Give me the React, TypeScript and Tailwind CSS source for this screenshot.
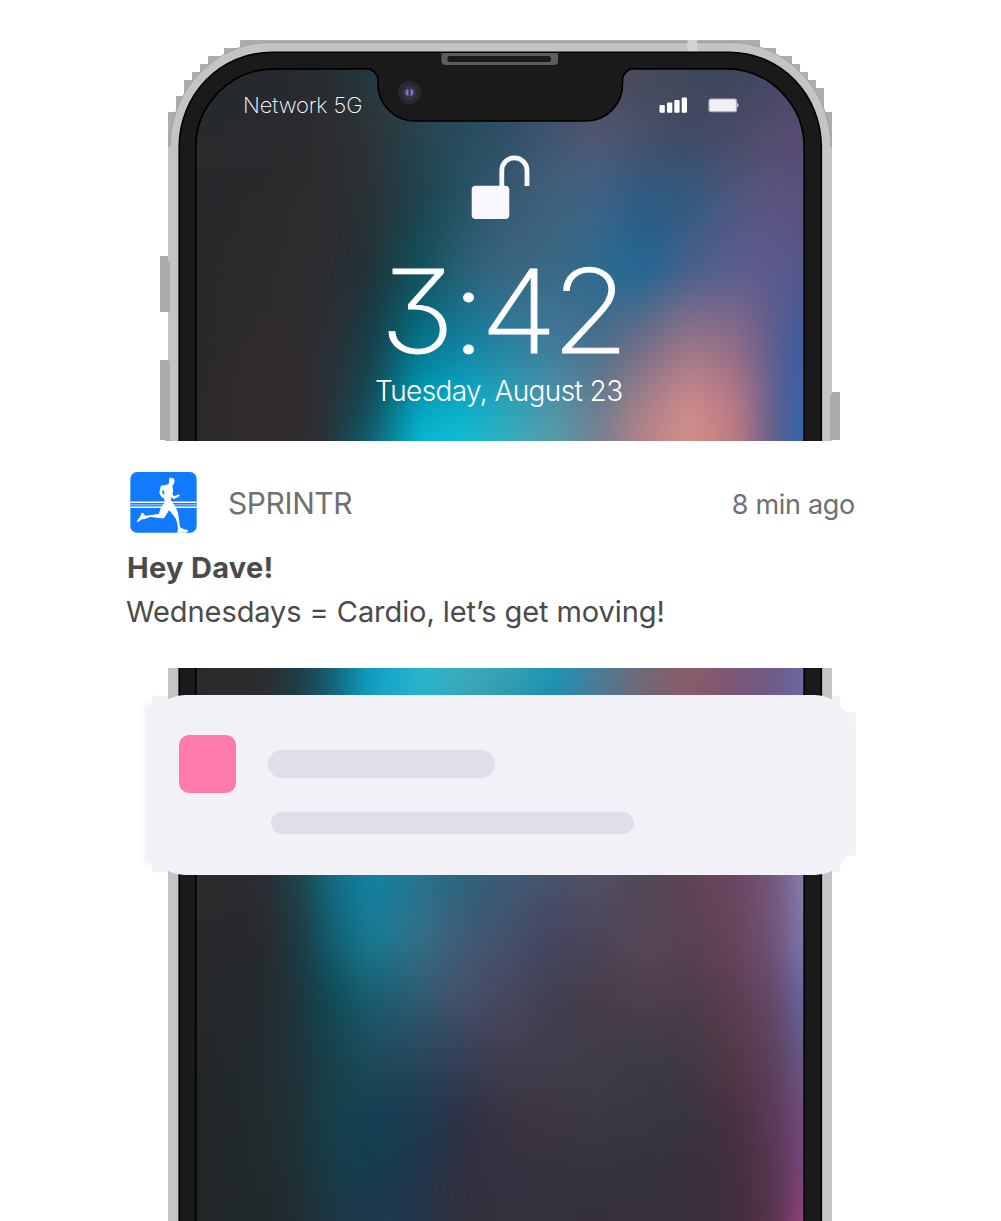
import React from "react";

const COLUMNS = [196, 260, 299, 330, 370, 420, 464, 509, 554, 598, 643, 689, 734, 777, 804];

// Each entry is a horizontal run of wallpaper colours at a given height.
const ROWS: [number, string][] = [
  [68, "262b2d 24282e 262b30 262c2f 213a40 2a434e 2c4a5a 334c60 404c60 4d4a5c 484a5a 40495a 3d4759 43456a 50486a"],
  [130, "282b2d 292b2e 2a2b2e 2d2e31 2e3338 27454f 2a4b5e 304f66 435470 525570 49506a 404963 484b66 534c6d 574a70"],
  [200, "28292c 2a292c 2c2b2e 2d2d30 2a3236 1e434d 265465 395a73 41627c 3e6487 2d5a82 335b80 50577f 5c5480 5a5080"],
  [270, "29282b 2c2a2d 2d2c2f 2c2e32 213238 0f525c 2c6076 3a6680 3a6986 2c6b91 206894 465f8c 5c5e90 5c5a8c 52588a"],
  [340, "2a282b 2f2b2e 302c30 2c3035 183d47 04748a 1080a0 2a809e 42789a 466e8c 6f6c88 997488 8e6c88 5b5c90 3c5ca0"],
  [400, "2b282b 322b2f 322c30 293237 134b57 00a0be 0caac6 2aa2b8 4c94a8 687c90 a47e88 cc8a8c ba7884 5c5e90 3462a8"],
  [440, "2b292b 332b2f 302c30 25343a 0f6070 08bad4 14bdd2 36aebe 5a9caa 78808e b88486 d4908a c07c82 5c5e8c 2c66b2"],
  [668, "2c292c 2b2c2d 1f3c46 146174 0fa0c4 29b4ce 3fabb8 38a4b2 1a96b8 487e9a 6e6876 8a5c68 7c5876 6e5c8c 6c6aa4"],
  [695, "2c292c 2b2c2d 1f3c46 146174 0fa0c4 29b4ce 38a6b8 2a9ab0 1e8db0 507a94 736676 8a5c68 7a5674 6e5c8c 6c6aa4"],
  [875, "2c2c2e 2d2b30 1e434d 146a80 1283a6 26738e 2d637b 3e5a74 48526c 544f64 504858 5e4454 6d4460 75597f 8a7eb2"],
  [940, "28292c 28292d 1e3942 115d6e 187b94 357088 3f5b76 454f6c 454560 4b4558 574758 584254 68425b 71557c 7c7aae"],
  [1000, "272a2c 24292c 1d363e 124953 175d70 305a70 46506a 48475e 404050 483c4a 4f3e4c 4d3c48 5a3e50 66496a 6268a4"],
  [1060, "24272a 232b2f 1e343b 18424a 1e4a5a 28465c 363f56 423d4e 403d4c 403c49 3c3a47 403944 543746 5e4260 695888"],
  [1120, "212628 232b2d 1e3238 17404a 123f52 1c3a50 2e3044 3a3442 3e3643 3c3844 383844 3a3442 48303f 5a3c58 744c7e"],
  [1170, "212628 222a2c 1f3036 183c48 133d50 21364c 31303f 363140 363240 363340 353240 38303e 432f3d 573752 7c447c"],
  [1221, "212628 20282a 1f2e33 1e3643 1e394b 24354a 332f3d 34303d 35303e 352f3c 38303d 39303d 422e3b 5a3450 94447e"],
];

function Wallpaper({ id }: { id: string }) {
  return (
    <g clipPath={`url(#${id}-screen)`}>
      <defs>
        <filter id={`${id}-soften`} filterUnits="userSpaceOnUse" x="100" y="0" width="800" height="1300" colorInterpolationFilters="sRGB">
          <feGaussianBlur stdDeviation="9 12" />
        </filter>
        {ROWS.map(([y, colours], i) => (
          <React.Fragment key={y}>
            <linearGradient id={`${id}-row${i}`} gradientUnits="userSpaceOnUse" x1="196" x2="804" y1="0" y2="0">
              {colours.split(" ").map((c, k) => (
                <stop key={k} offset={(COLUMNS[k] - 196) / 608} stopColor={`#${c}`} />
              ))}
            </linearGradient>
            {i > 0 && (
              <>
                <linearGradient id={`${id}-fade${i}`} gradientUnits="userSpaceOnUse" x1="0" x2="0" y1={ROWS[i - 1][0]} y2={y}>
                  <stop offset="0" stopColor="#fff" stopOpacity="0" />
                  <stop offset="1" stopColor="#fff" />
                </linearGradient>
                <mask id={`${id}-mask${i}`} maskUnits="userSpaceOnUse" x="140" y="0" width="720" height="1290">
                  <rect x="140" y={ROWS[i - 1][0]} width="720" height={1290 - ROWS[i - 1][0]} fill={`url(#${id}-fade${i})`} />
                </mask>
              </>
            )}
          </React.Fragment>
        ))}
      </defs>
      <g filter={`url(#${id}-soften)`}>
        {ROWS.map(([y], i) => (
          <rect
            key={y}
            x="140"
            y={i ? ROWS[i - 1][0] : 10}
            width="720"
            height={1290 - (i ? ROWS[i - 1][0] : 10)}
            fill={`url(#${id}-row${i})`}
            mask={i ? `url(#${id}-mask${i})` : undefined}
          />
        ))}
      </g>
    </g>
  );
}

const SCREEN =
  "M195.8 1240V147C195.8 104 231 68.800 275 68.800H369C372 69 378 75 378 79V84C378 105 395 121 415 121H586C606 121 622.5 105 622.5 84V79C622.5 75 628 69 631 68.800H726C769 68.800 804.2 104 804.2 147V1240Z";

function Phone({ id, top, height }: { id: string; top: number; height: number }) {
  return (
    <svg className="absolute inset-0" width="1001" height={height} viewBox={`0 ${top} 1001 ${height}`} aria-hidden="true">
      <defs>
        <clipPath id={`${id}-screen`}>
          <path d={SCREEN} />
        </clipPath>
      </defs>
      <path
        fill="#adadad"
        d="M168 1240V112H176V96H184V80H192V72H200V64H208V56H224V48H240V40H760V48H776V56H792V64H800V72H808V80H816V88H824V112H832V1240Z"
      />
      <path fill="#c4c4c4" d="M168 1240V147H832V1240Z" />
      <path fill="#c4c4c4" stroke="#8f9496" strokeWidth=".7" d="M170 147C170 89 216 42.5 270 42.5H731C785 42.5 831 89 831 147" />
      <path fill="#ababab" d="M160 256H168V261H170V312H160ZM160 360H168L170 362V441H165V440H160ZM832 392H840V440H830V395H832Z" />
      <path fill="#d4d4d4" d="M687.500 40H697V52H687.500Z" />
      <path fill="#1a1a1a" stroke="#000" strokeWidth="1.600" d="M179.200 1240V147C179.200 95 220 52.300 272 52.300H729C781 52.300 821.300 95 821.300 147V1240Z" />
      <Wallpaper id={id} />
      <path fill="none" stroke="#000" strokeWidth="1.700" d={SCREEN} />
      <path fill="#5d5d5d" d="M441.500 53H558V61Q558 65 554 65H445.500Q441.500 65 441.500 61Z" />
      <rect x="447.500" y="56" width="103.500" height="6" rx="2" fill="#1a1a1a" />
      <circle cx="409.500" cy="92.500" r="11.500" fill="#29292d" />
      <circle cx="409.500" cy="92.500" r="7" fill="#343150" />
      <path fill="#777bb3" d="M408.500 89C404.500 89 404.500 96 408.500 96ZM410.500 89C414.500 89 414.500 96 410.500 96Z" />
    </svg>
  );
}

function SignalIcon() {
  return (
    <svg width="29" height="16" viewBox="0 0 29 16" fill="#fff" aria-hidden="true">
      <rect x=".5" y="8" width="5.300" height="7.700" rx="1" />
      <rect x="8" y="5.500" width="5.300" height="10.200" rx="1" />
      <rect x="15.300" y="3" width="5.300" height="12.700" rx="1" />
      <rect x="22.700" y=".5" width="5.300" height="15.200" rx="1" />
    </svg>
  );
}

function BatteryIcon() {
  return (
    <svg width="31" height="15" viewBox="0 0 31 15" aria-hidden="true">
      <rect x="1" y="1" width="27.500" height="12.700" rx="2" fill="#f0f0f2" stroke="#b5adc0" strokeWidth="1.200" />
      <path fill="#c8c2d0" d="M29 5q1.500 0 1.500 2.300T29 9.600Z" />
    </svg>
  );
}

function UnlockIcon() {
  return (
    <svg width="60" height="65" viewBox="0 0 60 65" aria-hidden="true">
      <path fill="none" stroke="#f9f7fd" strokeWidth="4.800" d="M30.800 34V15.400A12.600 12.600 0 0 1 56 15.400V31" />
      <rect x=".7" y="30.700" width="37.600" height="33.300" rx="4" fill="#f9f7fd" />
    </svg>
  );
}

function SprintrLogo() {
  return (
    <svg width="67" height="61" viewBox="61 36 201 183" aria-hidden="true">
      <rect x="62" y="36" width="199" height="182" rx="20" fill="#127aff" />
      <path stroke="#fff" strokeWidth="4.500" d="M62 127H261M62 142H261" />
      <path stroke="#a8cfff" strokeWidth="3" d="M62 134.500H261" />
      <path
        fill="#fff"
        d="M178 56Q184 51 192 56Q196 60 194 67Q194 75 188 77L189 83Q192 92 188 101L193 109L209 103L210 108L192 118L185 111L184 121L193 134Q204 148 206 166L211 200Q214 206 235 210L234 215L227 218H202L205 207L203 191Q200 174 190 164L178 151L165 172Q163 176 156 175L122 171L105 177L97 178L84 187Q80 185 84 180L93 167L95 159L102 160L106 167L147 162L155 140L165 128L164 117L154 109L149 99L153 79Q156 74 166 76L177 72L178 66ZM160 88L157 97L163 106L164 99Z"
      />
    </svg>
  );
}

export default function App() {
  return (
    <main className="flex h-[1221px] w-[1001px] flex-col overflow-hidden bg-white font-['Inter',sans-serif]">
      <section className="relative h-[441px] shrink-0 overflow-hidden">
        <Phone id="upper" top={0} height={441} />
        <div className="relative flex flex-col pt-[92px]">
          <div className="flex h-[26px] items-center justify-between pr-[262px] pl-[243px] text-white">
            <span className="text-[22px] leading-[26px] font-extralight tracking-[-0.1px] whitespace-nowrap">Network 5G</span>
            <div className="flex items-center gap-5">
              <SignalIcon />
              <BatteryIcon />
            </div>
          </div>
          <div className="mt-[37px] ml-[471px]">
            <UnlockIcon />
          </div>
          <time className="mt-[33px] ml-[380px] h-[116px] origin-left scale-x-[1.08] self-start text-[116px] leading-[116px] font-extralight tracking-[-5px] whitespace-nowrap text-white [-webkit-text-stroke:0.9px_white] [font-feature-settings:'cv09']">
            3<span className="ml-[2px]">:</span>42
          </time>
          <p className="mt-[4px] ml-[375px] text-[28px] leading-[36px] font-light tracking-[-0.6px] whitespace-nowrap text-white">
            Tuesday, August 23
          </p>
        </div>
      </section>

      <article className="h-[227px] shrink-0 pt-[31px] pr-[146px] pl-[127px] text-[#4a4a4a]">
        <header className="flex h-[61px] items-center pl-[3px] text-[#707070]">
          <SprintrLogo />
          <span className="ml-[31px] text-[30px] leading-9 tracking-[-0.4px]">SPRINTR</span>
          <span className="mt-[5px] ml-auto text-[27px] leading-9 tracking-[-0.3px] whitespace-nowrap">8 min ago</span>
        </header>
        <h1 className="mt-[17px] text-[29px] leading-9 font-bold tracking-[0.3px] whitespace-nowrap">Hey Dave!</h1>
        <p className="mt-[8px] -ml-px text-[29px] leading-9 tracking-[-0.08px] whitespace-nowrap">Wednesdays = Cardio, let’s get moving!</p>
      </article>

      <section className="relative h-[553px] shrink-0 overflow-hidden pt-[27px]">
        <Phone id="lower" top={668} height={553} />
        <div className="relative ml-[144px] h-[180px] w-[712px]">
          <div className="absolute top-[9px] left-0 h-[160px] w-4 bg-[#f3f1f8] blur-[2px]" />
          <div className="absolute top-[1px] left-2 h-[176px] w-4 bg-[#f3f1f8]" />
          <div className="absolute top-[1px] right-4 h-[176px] w-2 bg-[#f3f1f8]" />
          <div className="absolute top-[17px] right-0 h-[144px] w-4 bg-[#f3f3f5]" />
          <div className="absolute inset-y-0 right-[5px] left-[5px] rounded-[36px] bg-[#f3f1f8]" />
          <div className="relative flex gap-8 pt-10 pl-[34.500px]">
            <div className="size-[57.500px] rounded-[10px] bg-[#ff7bac]" />
            <div className="flex flex-col pt-[15px]">
              <div className="h-[28px] w-[227px] rounded-full bg-[#dfdfe9]" />
              <div className="mt-[34px] ml-[3px] h-[22px] w-[363px] rounded-full bg-[#dfdfe9]" />
            </div>
          </div>
        </div>
      </section>
    </main>
  );
}
